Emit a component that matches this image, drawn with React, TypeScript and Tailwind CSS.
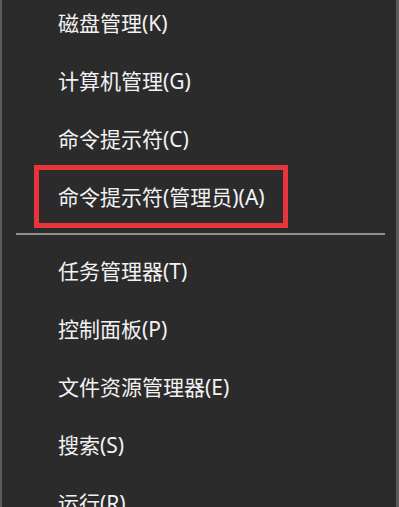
const topItems = ["磁盘管理(K)", "计算机管理(G)", "命令提示符(C)"];
const bottomItems = ["任务管理器(T)", "控制面板(P)", "文件资源管理器(E)", "搜索(S)", "运行(R)"];

function MenuItem({ label }: { label: string }) {
	return (
		<div className="flex h-[58px] items-center pl-[56px] text-[21px] leading-none text-[#f2f2f2]">
			{label}
		</div>
	);
}

export default function App() {
	return (
		<div
			className="h-[507px] w-[399px] overflow-hidden border-l-2 border-r-[3px] border-[#5c5c5c] bg-[#2b2b2b]"
			style={{ fontFamily: '"Noto Sans", "Noto Sans CJK SC", sans-serif' }}
		>
			<div className="-mt-[6px]">
				{topItems.map((item) => (
					<MenuItem key={item} label={item} />
				))}

				<div className="relative">
					<MenuItem label="命令提示符(管理员)(A)" />
					<div className="absolute left-[32px] top-[-3px] h-[63px] w-[254px] border-[5px] border-[#e8353b]" />
				</div>

				<div className="flex h-[16px] items-center pl-[14px] pr-[11px]">
					<div className="h-[2px] w-full bg-[#8f8f8f]" />
				</div>

				{bottomItems.map((item) => (
					<MenuItem key={item} label={item} />
				))}
			</div>
		</div>
	);
}
